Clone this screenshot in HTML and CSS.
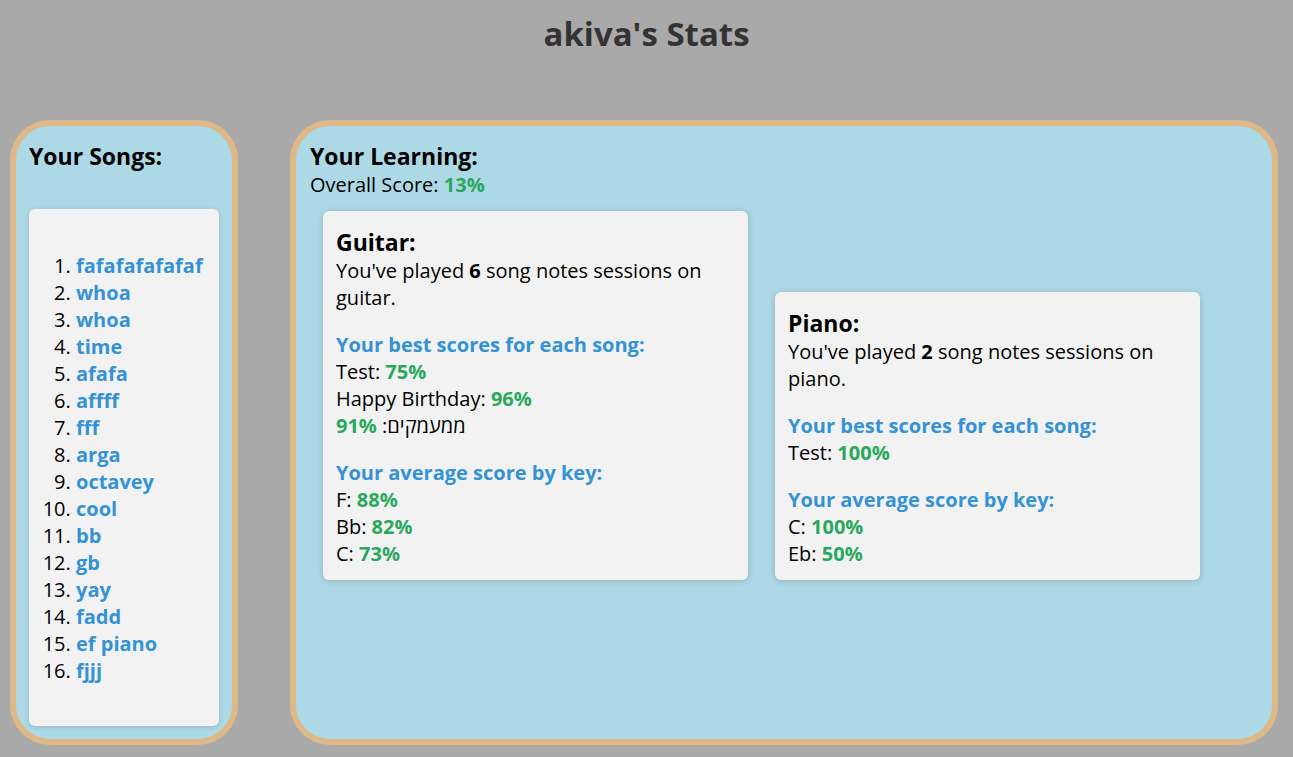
FILE: index.html
```html
<!DOCTYPE html>
<html lang="en">
<head>
<meta charset="utf-8">
<title>akiva's Stats</title>
<link rel="stylesheet" href="styles.css">
</head>
<body>
<h1 class="page-title">akiva's Stats</h1>
<main class="layout">
  <section class="panel panel-songs">
    <h3 class="panel-title">Your Songs:</h3>
    <div class="song-box">
      <ol class="song-list">
        <li><a class="song-link">fafafafafafaf</a></li>
        <li><a class="song-link">whoa</a></li>
        <li><a class="song-link">whoa</a></li>
        <li><a class="song-link">time</a></li>
        <li><a class="song-link">afafa</a></li>
        <li><a class="song-link">affff</a></li>
        <li><a class="song-link">fff</a></li>
        <li><a class="song-link">arga</a></li>
        <li><a class="song-link">octavey</a></li>
        <li><a class="song-link">cool</a></li>
        <li><a class="song-link">bb</a></li>
        <li><a class="song-link">gb</a></li>
        <li><a class="song-link">yay</a></li>
        <li><a class="song-link">fadd</a></li>
        <li><a class="song-link">ef piano</a></li>
        <li><a class="song-link">fjjj</a></li>
      </ol>
    </div>
  </section>
  <section class="panel panel-learning">
    <h3 class="panel-title">Your Learning:</h3>
    <div class="line">Overall Score: <b class="score">13%</b></div>
    <div class="cards">
      <div class="card">
        <h3 class="card-title">Guitar:</h3>
        <p class="card-text">You've played <b>6</b> song notes sessions on guitar.</p>
        <div class="group">
          <div class="sub">Your best scores for each song:</div>
          <div class="line">Test: <b class="score">75%</b></div>
          <div class="line">Happy Birthday: <b class="score">96%</b></div>
          <div class="line">ממעמקים: <b class="score">91%</b></div>
        </div>
        <div class="group">
          <div class="sub">Your average score by key:</div>
          <div class="line">F: <b class="score">88%</b></div>
          <div class="line">Bb: <b class="score">82%</b></div>
          <div class="line">C: <b class="score">73%</b></div>
        </div>
      </div>
      <div class="card">
        <h3 class="card-title">Piano:</h3>
        <p class="card-text">You've played <b>2</b> song notes sessions on piano.</p>
        <div class="group">
          <div class="sub">Your best scores for each song:</div>
          <div class="line">Test: <b class="score">100%</b></div>
        </div>
        <div class="group">
          <div class="sub">Your average score by key:</div>
          <div class="line">C: <b class="score">100%</b></div>
          <div class="line">Eb: <b class="score">50%</b></div>
        </div>
      </div>
    </div>
  </section>
</main>
</body>
</html>
```
FILE: styles.css
```css
html, body {
  margin: 0;
  padding: 0;
}
body {
  background: #a9a9a9;
  font-family: "Open Sans", "Noto Sans", "Liberation Sans", sans-serif;
  color: #000;
  width: 1293px;
  height: 757px;
  overflow: hidden;
}
.page-title {
  margin: 0;
  padding-top: 13px;
  height: 120px;
  box-sizing: border-box;
  text-align: center;
  font-size: 33px;
  line-height: 42px;
  font-weight: 700;
  color: #333;
}
.layout {
  display: flex;
  gap: 52px;
  padding-left: 10px;
  height: 625px;
}
.panel {
  box-sizing: border-box;
  height: 625px;
  background: #add8e6;
  border: 6px solid #deb887;
  border-radius: 40px;
  font-size: 20px;
  line-height: 27px;
}
.panel-songs {
  width: 228px;
  padding: 16px 13px 13px 13px;
  display: flex;
  flex-direction: column;
}
.panel-learning {
  width: 988px;
  padding: 16px 14px;
}
.panel-title {
  margin: 0;
  font-size: 23px;
  line-height: 29px;
  font-weight: 700;
}
.panel-songs .panel-title {
  margin-bottom: 38px;
}
.song-box {
  flex: 1;
  background: #f2f2f2;
  border-radius: 6px;
  box-shadow: 0 1px 5px rgba(0, 0, 0, 0.15);
  padding: 43px 8px 0 7px;
}
.song-list {
  margin: 0;
  padding-left: 40px;
}
.song-link {
  color: #3592d6;
  font-weight: 700;
}
.score {
  color: #29a85d;
  font-weight: 700;
}
.cards {
  display: flex;
  align-items: flex-end;
  gap: 27px;
  padding: 0 13px;
  margin-top: 13px;
}
.card {
  box-sizing: border-box;
  width: 425px;
  background: #f2f2f2;
  border-radius: 6px;
  box-shadow: 0 1px 6px rgba(0, 0, 0, 0.18);
  padding: 17px 13px 13px 13px;
}
.card-title {
  margin: 0;
  font-size: 23px;
  line-height: 29px;
  font-weight: 700;
}
.card-text {
  margin: 0;
}
.group {
  margin-top: 20px;
}
.sub {
  color: #3592d6;
  font-weight: 700;
}
```
